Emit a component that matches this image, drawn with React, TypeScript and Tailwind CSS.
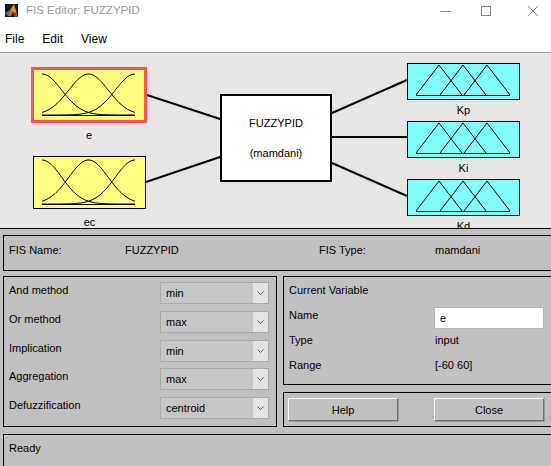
const font = "font-['Liberation_Sans',Arial,sans-serif]";

function gaussPoints(c: number, sigma: number, x0: number, x1: number, yTop: number, yBot: number) {
  const pts: string[] = [];
  for (let x = x0; x <= x1; x += 1) {
    const y = yBot - (yBot - yTop) * Math.exp(-((x - c) * (x - c)) / (2 * sigma * sigma));
    pts.push(`${x},${y.toFixed(1)}`);
  }
  return pts.join(" ");
}

function InputMfs({ yTop, yBot }: { yTop: number; yBot: number }) {
  const x0 = 42;
  const x1 = 135;
  const mid = (x0 + x1) / 2;
  const s = 19.75;
  return (
    <g fill="none" stroke="#000" strokeWidth={1}>
      <polyline points={gaussPoints(x0, s, x0, x1, yTop, yBot)} />
      <polyline points={gaussPoints(mid, s, x0, x1, yTop, yBot)} />
      <polyline points={gaussPoints(x1, s, x0, x1, yTop, yBot)} />
      <line x1={x0} y1={yBot + 0.5} x2={x1} y2={yBot + 0.5} />
    </g>
  );
}

function OutputMfs({ yTop, yBot }: { yTop: number; yBot: number }) {
  const peaks = [439, 463, 487];
  return (
    <g fill="none" stroke="#000" strokeWidth={1}>
      {peaks.map((p) => (
        <polyline key={p} points={`${p - 23},${yBot} ${p},${yTop} ${p + 23},${yBot}`} />
      ))}
      <line x1={416} y1={yBot + 0.5} x2={510} y2={yBot + 0.5} />
    </g>
  );
}

function Dropdown({ value }: { value: string }) {
  return (
    <div className="flex h-[22px] w-[109px] items-center border border-[#a8a8a8] bg-[#c6c6c6]">
      <span className="flex-1 pl-[5px] text-[11px] leading-[14px]">{value}</span>
      <span className="flex h-full w-[15px] items-center justify-center bg-[#e4e4e4]">
        <svg width="7" height="4" viewBox="0 0 7 4">
          <polyline points="0.5,0.5 3.5,3.5 6.5,0.5" fill="none" stroke="#5a5a5a" strokeWidth="1" />
        </svg>
      </span>
    </div>
  );
}

function Button({ label }: { label: string }) {
  return (
    <div className="flex h-[23px] w-[110px] items-center justify-center border border-t-white border-l-white border-r-[#6f6f6f] border-b-[#6f6f6f] bg-[#c0c0c0] text-[11px] shadow-[1px_1px_0_#9a9a9a]">
      {label}
    </div>
  );
}

export default function App() {
  const methods = [
    ["And method", "min"],
    ["Or method", "max"],
    ["Implication", "min"],
    ["Aggregation", "max"],
    ["Defuzzification", "centroid"],
  ];
  const outputs = [
    { name: "Kp", top: 10 },
    { name: "Ki", top: 68 },
    { name: "Kd", top: 126 },
  ];

  return (
    <div className={`flex h-[466px] w-[551px] flex-col overflow-hidden bg-white text-black ${font}`}>
      {/* title bar */}
      <div className="flex h-[21px] shrink-0 items-center">
        <svg className="ml-[5px]" width="13" height="13" viewBox="0 0 13 13">
          <rect width="13" height="13" fill="#0b1b2a" />
          <polygon points="0,9 5,6 8,8 3,12" fill="#1f7fbf" />
          <polygon points="5,6 9,0 12,10 8,8" fill="#f28b1e" />
          <polygon points="8,8 12,10 13,13 10,13" fill="#c1361b" />
          <polygon points="5,6 8,8 6,12 3,12" fill="#e0641a" />
        </svg>
        <span className="ml-[8px] text-[11.5px] text-[#9a9a9a]">FIS Editor: FUZZYPID</span>
        <div className="ml-auto flex items-center">
          <svg width="12" height="12" viewBox="0 0 12 12" className="mr-[28px]">
            <line x1="0" y1="6.5" x2="11" y2="6.5" stroke="#8a8a8a" />
          </svg>
          <svg width="12" height="12" viewBox="0 0 12 12" className="mr-[35px]">
            <rect x="1.5" y="1.5" width="9" height="9" fill="none" stroke="#8a8a8a" />
          </svg>
          <svg width="12" height="12" viewBox="0 0 12 12" className="mr-[12px]">
            <line x1="1" y1="1" x2="11" y2="11" stroke="#8a8a8a" />
            <line x1="11" y1="1" x2="1" y2="11" stroke="#8a8a8a" />
          </svg>
        </div>
      </div>

      {/* menu bar */}
      <div className="flex h-[32px] shrink-0 gap-[18px] border-b border-[#a0a0a0] pl-[5px] pt-[10px] text-[12px] leading-[16px]">
        <span>File</span>
        <span>Edit</span>
        <span>View</span>
      </div>

      {/* diagram */}
      <div className="relative h-[176px] shrink-0 overflow-hidden border-b border-black bg-[#e6e6e6] text-[11px]">
        <div className="absolute left-[31px] top-[14px] h-[56px] w-[116px] border-[3px] border-[#ff5252] bg-[#ffff80]" />
        <div className="absolute left-[31px] top-[75px] w-[116px] text-center leading-[14px]">e</div>
        <div className="absolute left-[33px] top-[103px] h-[53px] w-[113px] border border-black bg-[#ffff80]" />
        <div className="absolute left-[33px] top-[162px] w-[113px] text-center leading-[14px]">ec</div>

        <div className="absolute left-[220px] top-[41px] flex h-[88px] w-[112px] flex-col items-center justify-center gap-[16px] border-2 border-black bg-white leading-[14px]">
          <span>FUZZYPID</span>
          <span>(mamdani)</span>
        </div>

        {outputs.map((o) => (
          <div key={o.name}>
            <div
              className="absolute left-[407px] h-[37px] w-[113px] border border-black bg-[#80ffff]"
              style={{ top: o.top }}
            />
            <div
              className="absolute left-[407px] w-[113px] text-center leading-[14px]"
              style={{ top: o.top + 40 }}
            >
              {o.name}
            </div>
          </div>
        ))}

        <svg className="pointer-events-none absolute left-0 top-0" width="551" height="175">
          <g stroke="#000" strokeWidth={2}>
            <line x1={147} y1={42} x2={220} y2={66} />
            <line x1={146} y1={129} x2={220} y2={104} />
            <line x1={332} y1={60} x2={407} y2={27} />
            <line x1={332} y1={84} x2={407} y2={84} />
            <line x1={332} y1={110} x2={407} y2={143} />
          </g>
          <InputMfs yTop={21} yBot={62} />
          <InputMfs yTop={107} yBot={151} />
          <OutputMfs yTop={12} yBot={42} />
          <OutputMfs yTop={70} yBot={100} />
          <OutputMfs yTop={128} yBot={158} />
        </svg>
      </div>

      {/* lower panels */}
      <div className="flex flex-1 flex-col bg-[#c0c0c0] pl-[3px] pt-[6px] text-[11px] leading-[14px]">
        <div className="flex h-[36px] border border-r-0 border-black pt-[7px]">
          <span className="w-[121px] pl-[5px]">FIS Name:</span>
          <span className="w-[194px]">FUZZYPID</span>
          <span className="w-[116px]">FIS Type:</span>
          <span>mamdani</span>
        </div>

        <div className="mt-[5px] flex gap-[6px]">
          <div className="flex h-[151px] w-[274px] flex-col border border-black pt-[5px]">
            {methods.map(([label, value]) => (
              <div key={label} className="flex h-[29px] items-start">
                <span className="w-[156px] pl-[5px] pt-px">{label}</span>
                <Dropdown value={value} />
              </div>
            ))}
          </div>

          <div className="flex flex-1 flex-col gap-[7px]">
            <div className="flex h-[109px] flex-col border border-r-0 border-black pl-[5px] pt-[6px]">
              <div className="h-[25px]">Current Variable</div>
              <div className="flex h-[25px] items-start">
                <span className="w-[145px]">Name</span>
                <div className="-mt-px flex h-[22px] w-[110px] items-center border border-[#b4b4b4] bg-white pl-[5px]">e</div>
              </div>
              <div className="flex h-[25px]">
                <span className="w-[146px]">Type</span>
                <span>input</span>
              </div>
              <div className="flex h-[25px]">
                <span className="w-[146px]">Range</span>
                <span>[-60 60]</span>
              </div>
            </div>
            <div className="flex h-[35px] gap-[36px] border border-r-0 border-black pl-[4px] pt-[5px]">
              <Button label="Help" />
              <Button label="Close" />
            </div>
          </div>
        </div>

        <div className="mt-[7px] flex-1 border border-r-0 border-b-0 border-black pl-[5px] pt-[6px]">Ready</div>
      </div>
    </div>
  );
}
